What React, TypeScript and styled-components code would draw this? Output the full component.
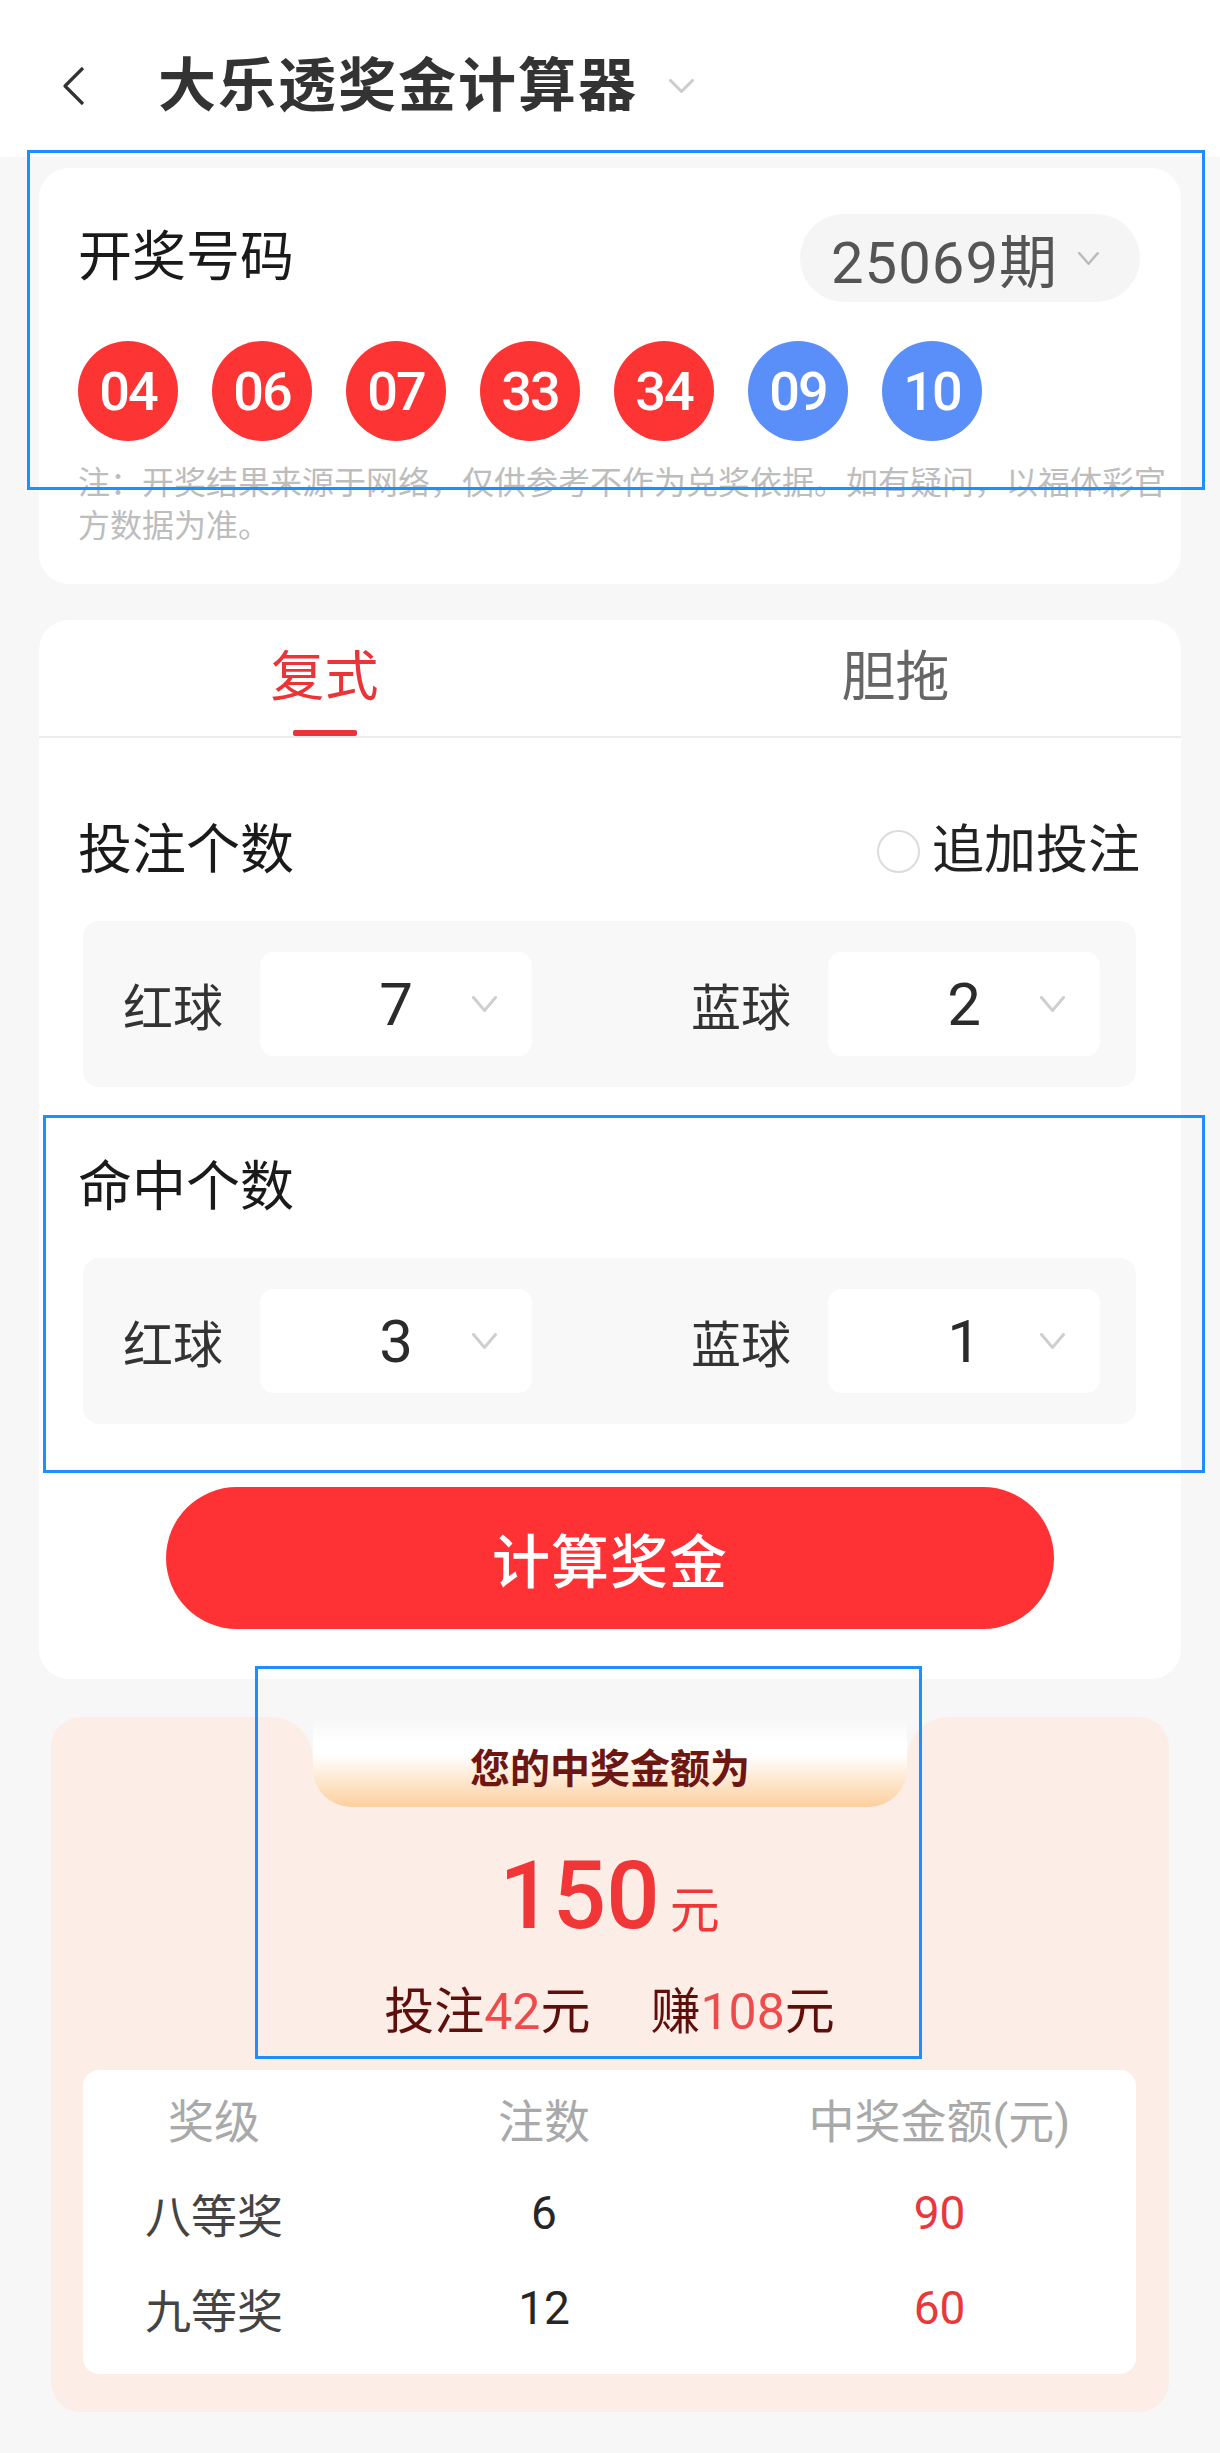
import React from 'react';
import styled, { createGlobalStyle } from 'styled-components';

const GlobalStyle = createGlobalStyle`
  body {
    margin: 0;
    background: #f7f7f7;
    font-family: Roboto, "Noto Sans CJK SC", sans-serif;
    color: #333;
  }
`;

const Page = styled.div`
  position: relative;
  width: 1220px;
  min-height: 2453px;
  background: #f7f7f7;
  overflow: hidden;
`;

const Header = styled.header`
  display: flex;
  align-items: center;
  height: 157px;
  padding: 14px 0 0 62px;
  background: #fff;
  box-sizing: border-box;
`;

const Title = styled.h1`
  margin: 0 31px 0 72px;
  font-size: 58px;
  font-weight: 700;
  letter-spacing: 2px;
  color: #333;
  line-height: 1;
`;

const Content = styled.main`
  display: flex;
  flex-direction: column;
  gap: 36px;
  padding: 11px 39px 40px;
`;

const Card = styled.section`
  background: #fff;
  border-radius: 30px;
`;

const DrawCard = styled(Card)`
  padding: 46px 41px 36px 39px;
`;

const Row = styled.div`
  display: flex;
  align-items: center;
  justify-content: space-between;
`;

const SectionTitle = styled.h2`
  margin: 0;
  font-size: 54px;
  font-weight: 400;
  line-height: 60px;
  color: #1a1a1a;
`;

const PeriodPill = styled.div`
  display: flex;
  align-items: center;
  gap: 20px;
  height: 88px;
  padding: 0 41px 0 31px;
  border-radius: 44px;
  background: #f5f5f5;
  font-size: 58px;
  letter-spacing: 1px;
  color: #555;
`;

const Balls = styled.div`
  display: flex;
  gap: 34px;
  margin-top: 39px;
`;

const Ball = styled.div<{ $blue?: boolean }>`
  width: 100px;
  height: 100px;
  border-radius: 50%;
  background: ${({ $blue }) => ($blue ? '#5a8ef8' : '#fd3434')};
  color: #fff;
  display: flex;
  align-items: center;
  justify-content: center;
  font-family: Roboto, sans-serif;
  font-size: 54px;
  font-weight: 500;
  letter-spacing: -2px;
`;

const Note = styled.p`
  margin: 21px -34px 0 0;
  font-size: 32px;
  line-height: 43px;
  color: #bdbdbd;
`;

const CalcCard = styled(Card)`
  padding-bottom: 50px;
`;

const Tabs = styled.div`
  display: flex;
  border-bottom: 2px solid #ececec;
`;

const Tab = styled.div<{ $active?: boolean }>`
  flex: 1;
  height: 116px;
  display: flex;
  flex-direction: column;
  align-items: center;
  justify-content: flex-end;
  gap: 12px;
  font-size: 54px;
  line-height: 80px;
  color: ${({ $active }) => ($active ? '#ea3437' : '#666')};

  &::after {
    content: '';
    width: 64px;
    height: 6px;
    border-radius: 2px;
    background: ${({ $active }) => ($active ? '#ea3437' : 'transparent')};
  }
`;

const Section = styled.div<{ $top: number }>`
  padding: ${({ $top }) => $top}px 41px 0 39px;
`;

const Extra = styled.label`
  display: flex;
  align-items: center;
  gap: 12px;
  font-size: 52px;
  line-height: 60px;
  color: #222;
`;

const Radio = styled.span`
  width: 39px;
  height: 39px;
  border-radius: 50%;
  border: 2px solid #dcdcdc;
`;

const Panel = styled.div`
  display: flex;
  align-items: center;
  justify-content: space-between;
  margin: 40px 4px 0 5px;
  padding: 31px 36px 31px 40px;
  border-radius: 16px;
  background: #f8f8f8;
`;

const Group = styled.div`
  display: flex;
  align-items: center;
  gap: 37px;
`;

const GroupLabel = styled.span`
  font-size: 50px;
  color: #333;
`;

const Select = styled.div`
  display: grid;
  grid-template-columns: 1fr auto 1fr;
  align-items: center;
  width: 272px;
  height: 104px;
  padding-right: 35px;
  box-sizing: border-box;
  border-radius: 14px;
  background: #fff;
`;

const SelectValue = styled.span`
  grid-column: 2;
  font-family: Roboto, sans-serif;
  font-size: 60px;
  color: #2b2b2b;
  padding-left: 35px;
`;

const SelectCaret = styled.span`
  grid-column: 3;
  justify-self: end;
  display: flex;
`;

const CalcButton = styled.button`
  display: block;
  width: 888px;
  height: 142px;
  margin: 63px auto 0;
  border: none;
  border-radius: 71px;
  background: #fe3234;
  color: #fff;
  font-family: "Noto Sans CJK SC", sans-serif;
  font-size: 58px;
  font-weight: 500;
  letter-spacing: 1px;
`;

const ResultCard = styled.section`
  display: flex;
  flex-direction: column;
  margin: 2px 12px 0;
`;

const ResultTop = styled.div`
  display: flex;
  height: 90px;
`;

const Shoulder = styled.div<{ $side: 'left' | 'right' }>`
  flex: 1;
  background: #fdede7;
  border-radius: ${({ $side }) => ($side === 'left' ? '30px 42px 0 0' : '42px 30px 0 0')};
`;

const BannerSlot = styled.div`
  width: 594px;
  background: linear-gradient(180deg, transparent 50%, #fdede7 50%);
`;

const Banner = styled.div`
  height: 100%;
  display: flex;
  align-items: center;
  justify-content: center;
  padding-top: 8px;
  box-sizing: border-box;
  border-radius: 0 0 38px 38px;
  background: linear-gradient(
    180deg,
    rgba(255, 255, 255, 0) 0%,
    #fff 28%,
    #fff 42%,
    #fee6cc 72%,
    #fccf9f 100%
  );
  font-family: "Noto Sans CJK SC", sans-serif;
  font-size: 40px;
  font-weight: 700;
  color: #6e1612;
`;

const ResultBody = styled.div`
  display: flex;
  flex-direction: column;
  align-items: center;
  padding: 34px 33px 38px 32px;
  background: #fdede7;
  border-radius: 0 0 30px 30px;
`;

const Amount = styled.div`
  display: flex;
  align-items: baseline;
  gap: 10px;
  line-height: 110px;
  color: #f03636;
`;

const AmountValue = styled.span`
  font-family: Roboto, sans-serif;
  font-size: 94px;
  font-weight: 500;
`;

const AmountUnit = styled.span`
  font-family: "Noto Sans CJK SC", sans-serif;
  font-size: 50px;
`;

const Summary = styled.div`
  display: flex;
  gap: 60px;
  margin-top: 21px;
  font-size: 50px;
  line-height: 60px;
  color: #5e0f0b;
`;

const Hot = styled.span`
  color: #ef4b4b;
`;

const Table = styled.div`
  align-self: stretch;
  display: grid;
  grid-template-columns: 262px 398px 1fr;
  margin-top: 28px;
  padding: 0 0 19px;
  border-radius: 16px;
  background: #fff;
`;

const Cell = styled.div<{ $tone?: 'head' | 'name' | 'num' | 'money' }>`
  height: 95px;
  display: flex;
  align-items: center;
  justify-content: center;
  font-size: 46px;
  color: ${({ $tone }) =>
    $tone === 'head' ? '#a9a9a9' : $tone === 'money' ? '#e8383b' : $tone === 'num' ? '#262626' : '#444'};
`;

const Marker = styled.div<{ $x: number; $y: number; $w: number; $h: number }>`
  position: absolute;
  left: ${({ $x }) => $x}px;
  top: ${({ $y }) => $y}px;
  width: ${({ $w }) => $w}px;
  height: ${({ $h }) => $h}px;
  border: 3px solid #1e8fff;
  box-sizing: border-box;
  pointer-events: none;
`;

const Caret = ({ w, h, color, sw = 3 }: { w: number; h: number; color: string; sw?: number }) => (
  <svg width={w} height={h} viewBox={`0 0 ${w} ${h}`} fill="none">
    <polyline
      points={`${sw / 2},${sw / 2} ${w / 2},${h - sw / 2} ${w - sw / 2},${sw / 2}`}
      stroke={color}
      strokeWidth={sw}
      strokeLinejoin="round"
      strokeLinecap="round"
    />
  </svg>
);

const BackIcon = () => (
  <svg width="24" height="40" viewBox="0 0 24 40" fill="none">
    <polyline points="21,2 3,20 21,38" stroke="#333" strokeWidth="3.2" strokeLinejoin="round" />
  </svg>
);

const reds = ['04', '06', '07', '33', '34'];
const blues = ['09', '10'];

const BallPicker = ({ red, blue }: { red: number; blue: number }) => (
  <Panel>
    <Group>
      <GroupLabel>红球</GroupLabel>
      <Select>
        <SelectValue>{red}</SelectValue>
        <SelectCaret>
          <Caret w={25} h={16} color="#cfcfcf" />
        </SelectCaret>
      </Select>
    </Group>
    <Group>
      <GroupLabel>蓝球</GroupLabel>
      <Select>
        <SelectValue>{blue}</SelectValue>
        <SelectCaret>
          <Caret w={25} h={16} color="#cfcfcf" />
        </SelectCaret>
      </Select>
    </Group>
  </Panel>
);

const prizes = [
  { name: '八等奖', count: 6, money: 90 },
  { name: '九等奖', count: 12, money: 60 },
];

export default function App() {
  return (
    <Page>
      <GlobalStyle />
      <Header>
        <BackIcon />
        <Title>大乐透奖金计算器</Title>
        <Caret w={25} h={14} color="#cccccc" />
      </Header>

      <Content>
        <DrawCard>
          <Row>
            <SectionTitle>开奖号码</SectionTitle>
            <PeriodPill>
              <span>25069期</span>
              <Caret w={21} h={13} color="#bbbbbb" sw={2.5} />
            </PeriodPill>
          </Row>
          <Balls>
            {reds.map((n) => (
              <Ball key={n}>{n}</Ball>
            ))}
            {blues.map((n) => (
              <Ball key={n} $blue>
                {n}
              </Ball>
            ))}
          </Balls>
          <Note>注：开奖结果来源于网络，仅供参考不作为兑奖依据。如有疑问，以福体彩官方数据为准。</Note>
        </DrawCard>

        <CalcCard>
          <Tabs>
            <Tab $active>复式</Tab>
            <Tab>胆拖</Tab>
          </Tabs>
          <Section $top={83}>
            <Row>
              <SectionTitle>投注个数</SectionTitle>
              <Extra>
                <Radio />
                追加投注
              </Extra>
            </Row>
            <BallPicker red={7} blue={2} />
          </Section>
          <Section $top={71}>
            <SectionTitle>命中个数</SectionTitle>
            <BallPicker red={3} blue={1} />
          </Section>
          <CalcButton>计算奖金</CalcButton>
        </CalcCard>

        <ResultCard>
          <ResultTop>
            <Shoulder $side="left" />
            <BannerSlot>
              <Banner>您的中奖金额为</Banner>
            </BannerSlot>
            <Shoulder $side="right" />
          </ResultTop>
          <ResultBody>
            <Amount>
              <AmountValue>150</AmountValue>
              <AmountUnit>元</AmountUnit>
            </Amount>
            <Summary>
              <span>
                投注<Hot>42</Hot>元
              </span>
              <span>
                赚<Hot>108</Hot>元
              </span>
            </Summary>
            <Table>
              <Cell $tone="head">奖级</Cell>
              <Cell $tone="head">注数</Cell>
              <Cell $tone="head">中奖金额(元)</Cell>
              {prizes.map((p) => (
                <React.Fragment key={p.name}>
                  <Cell $tone="name">{p.name}</Cell>
                  <Cell $tone="num">{p.count}</Cell>
                  <Cell $tone="money">{p.money}</Cell>
                </React.Fragment>
              ))}
            </Table>
          </ResultBody>
        </ResultCard>
      </Content>

      <Marker $x={27} $y={150} $w={1178} $h={340} />
      <Marker $x={43} $y={1115} $w={1162} $h={358} />
      <Marker $x={255} $y={1666} $w={667} $h={393} />
    </Page>
  );
}
